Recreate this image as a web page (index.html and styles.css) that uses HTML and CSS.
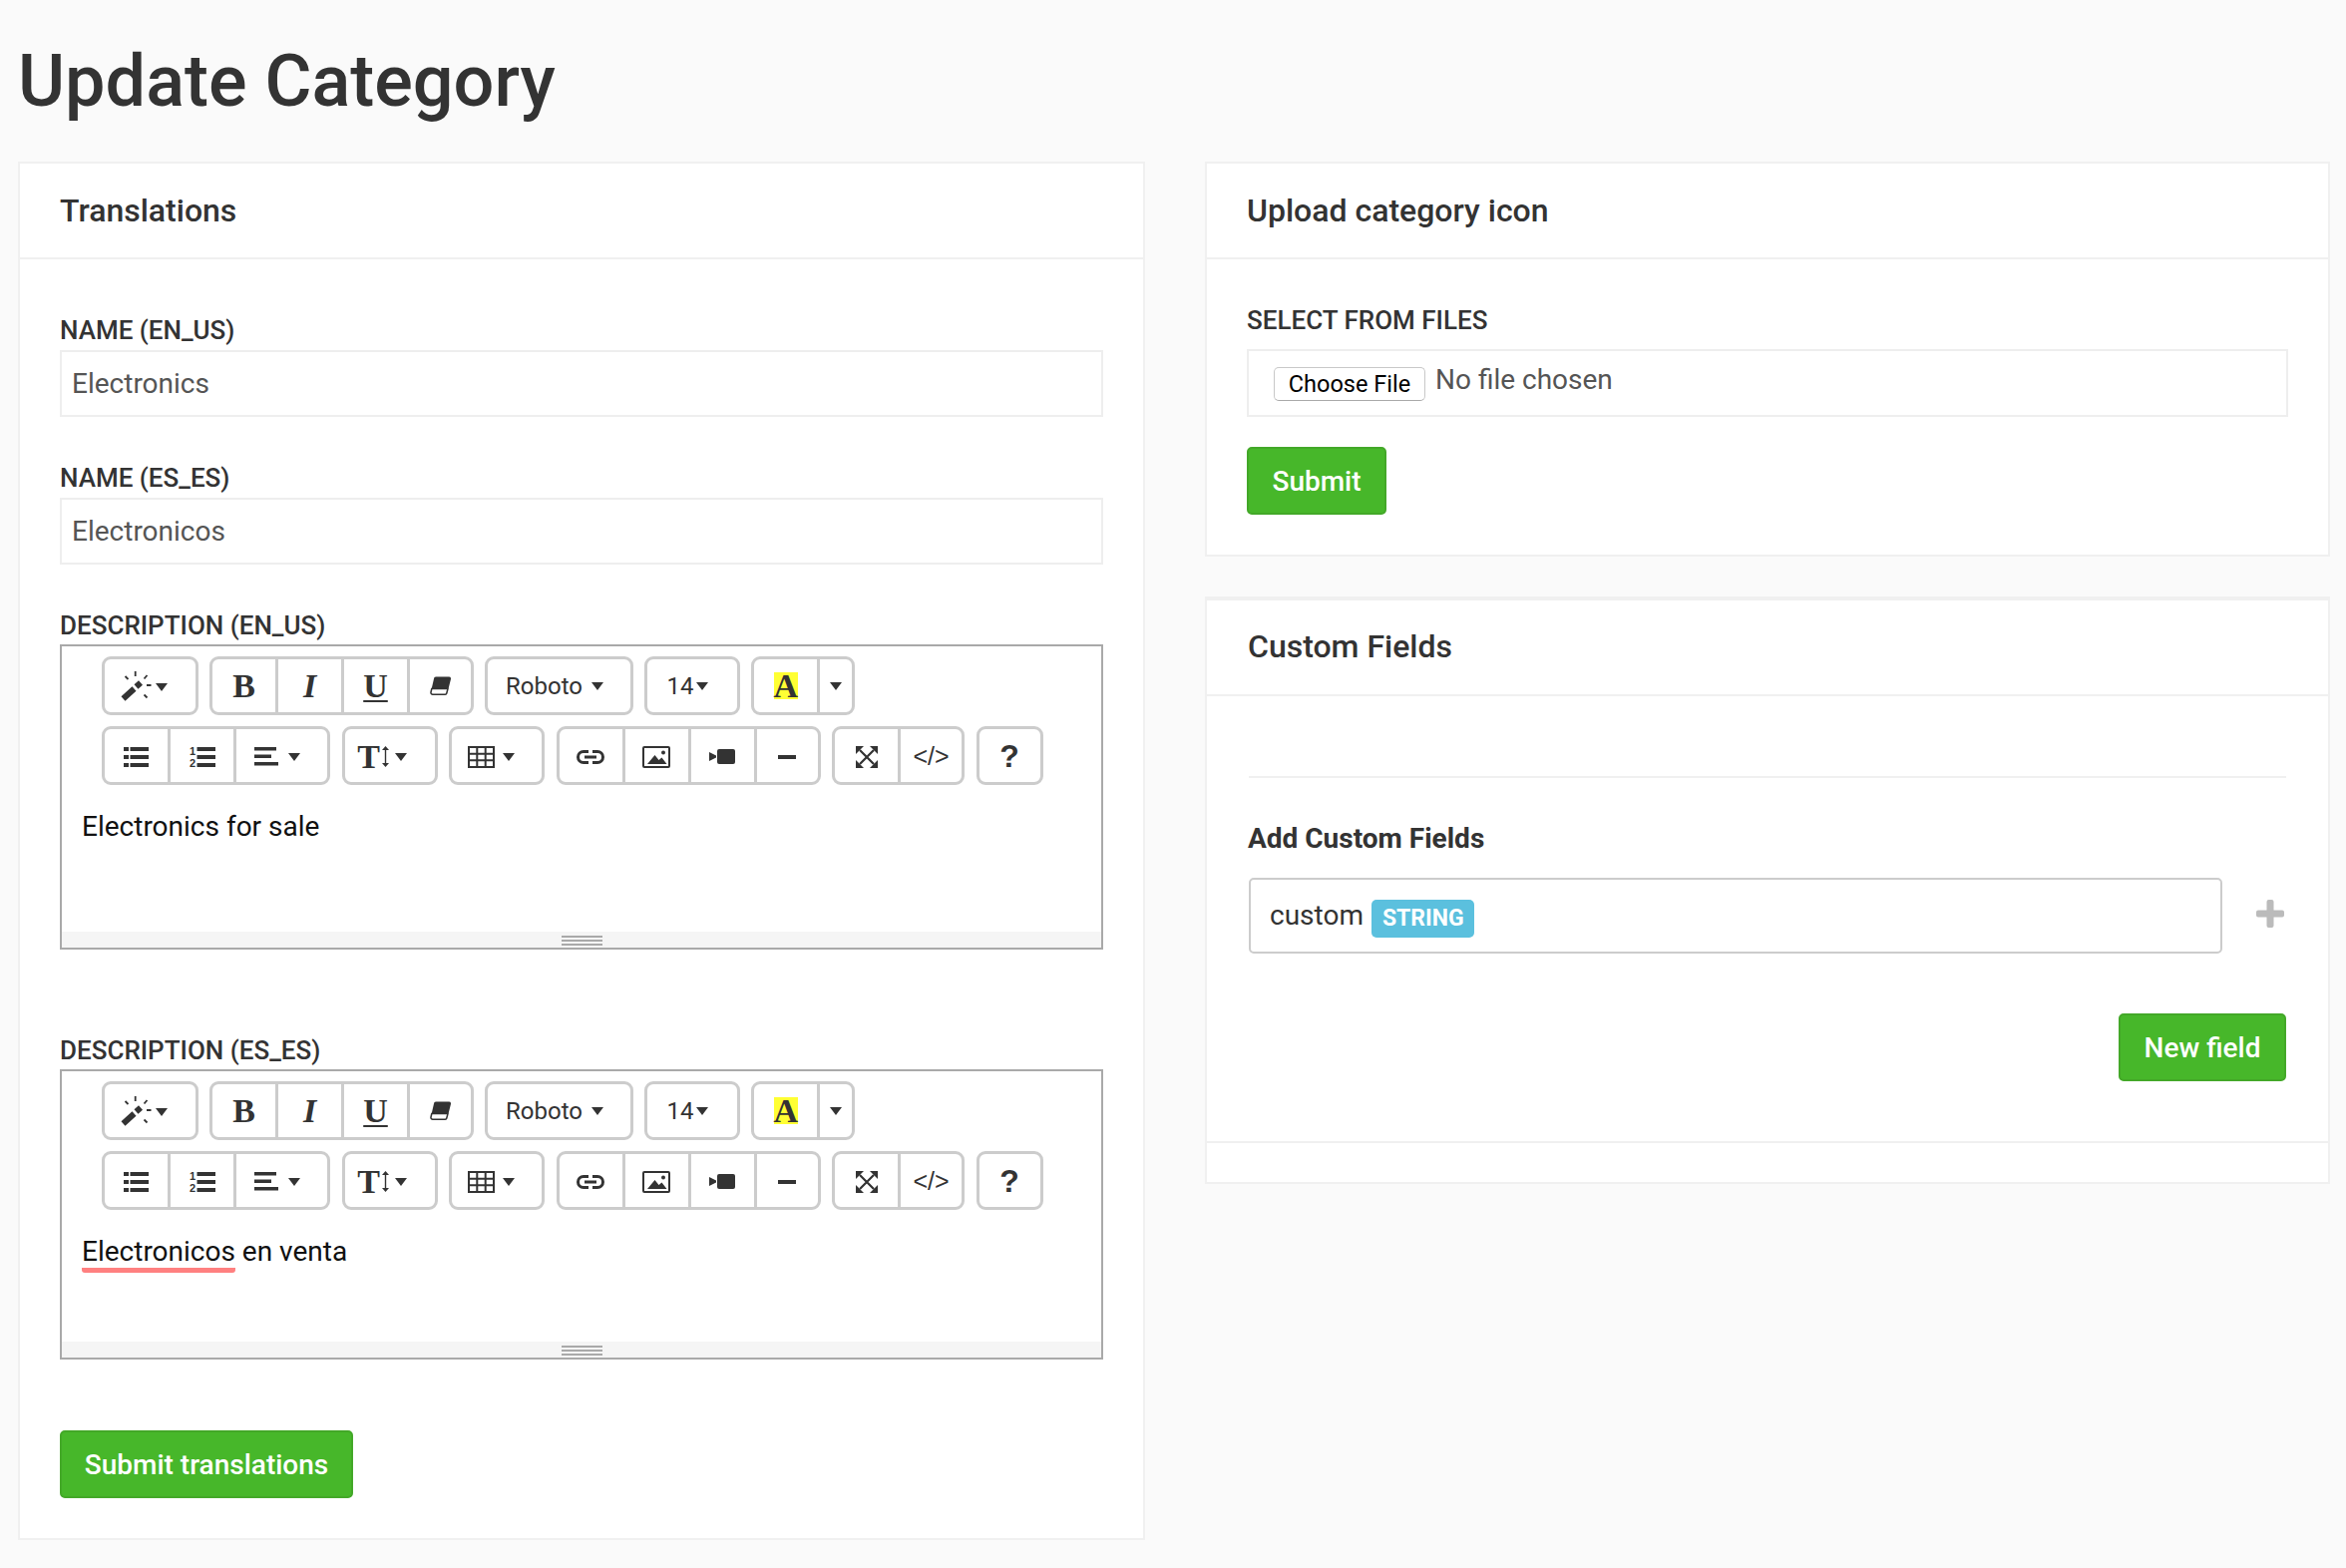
FILE: index.html
```html
<!DOCTYPE html>
<html>

<head>
    <meta charset="utf-8">
    <title>Update Category</title>
    <link rel="stylesheet" href="styles.css">
</head>

<body>
    <svg class="sprites" width="0" height="0">
        <symbol id="i-wand" viewBox="0 0 33 32">
            <path d="M3.500 28.500L14.500 18.500M16.500 16.500L21 12.500" stroke="currentColor" stroke-width="6" fill="none"/>
            <path d="M15.700 1v5M5.500 6l3 3M27.500 5l-3 3.500M27 15h4.500M24.500 24.500l3 3" stroke="currentColor" stroke-width="1.800" fill="none"/>
        </symbol>
        <symbol id="i-eraser" viewBox="0 0 21 19">
            <path d="M6 0.500h13a2 2 0 0 1 2 2.200L18.700 12H1.800L4 2.500a2 2 0 0 1 2-2z" fill="currentColor"/>
            <path d="M1.800 12.500H18L16.800 17a1.500 1.500 0 0 1-1.500 1.200H2.800A1.800 1.800 0 0 1 1 16z" fill="none" stroke="currentColor" stroke-width="1.500"/>
        </symbol>
        <symbol id="i-ul" viewBox="0 0 25 20">
            <path d="M0 0h5v4H0zM0 8h5v4H0zM0 16h5v4H0zM6.500 0H25v4H6.500zM6.500 8H25v4H6.500zM6.500 16H25v4H6.500z" fill="currentColor"/>
        </symbol>
        <symbol id="i-align" viewBox="0 0 24 19">
            <path d="M0 0h22v3.500H0zM0 7.500h17v3.500H0zM0 15h24v3.500H0z" fill="currentColor"/>
        </symbol>
        <symbol id="i-updown" viewBox="0 0 7 21">
            <path d="M3.500 2v17" stroke="currentColor" stroke-width="1.400"/>
            <path d="M3.500 0L7 4H0zM3.500 21L7 17H0z" fill="currentColor"/>
        </symbol>
        <symbol id="i-table" viewBox="0 0 27 22">
            <path d="M1 1h25v20H1zM1 7.700h25M1 14.300h25M9.300 1v20M17.700 1v20" fill="none" stroke="currentColor" stroke-width="2"/>
        </symbol>
        <symbol id="i-link" viewBox="0 0 28 14">
            <path d="M12 1.500H7a5.500 5.500 0 0 0 0 11h5M16 1.500h5a5.500 5.500 0 0 1 0 11h-5M8 7h12" fill="none" stroke="currentColor" stroke-width="3"/>
        </symbol>
        <symbol id="i-picture" viewBox="0 0 28 22">
            <rect x="1" y="1" width="26" height="20" rx="1" fill="none" stroke="currentColor" stroke-width="2"/>
            <path d="M5 18l7.500-9 4 5 3-2.500 5 6.500z" fill="currentColor"/>
            <circle cx="21" cy="6.500" r="2" fill="currentColor"/>
        </symbol>
        <symbol id="i-video" viewBox="0 0 26 15">
            <path d="M0 3l7 3.500v2L0 12z" fill="currentColor"/>
            <rect x="8" y="0" width="18" height="15" rx="2" fill="currentColor"/>
        </symbol>
        <symbol id="i-expand" viewBox="0 0 22 22">
            <path d="M4 4l14 14M18 4L4 18" stroke="currentColor" stroke-width="2.200"/>
            <path d="M0 0h8L0 8zM22 0v8L14 0zM0 22v-8l8 8zM22 22h-8l8-8z" fill="currentColor"/>
        </symbol>
        <symbol id="i-plus" viewBox="0 0 28 28">
            <path d="M10.500 2a2 2 0 0 1 2-2h3a2 2 0 0 1 2 2v8.500H26a2 2 0 0 1 2 2v3a2 2 0 0 1-2 2h-8.500V26a2 2 0 0 1-2 2h-3a2 2 0 0 1-2-2v-8.500H2a2 2 0 0 1-2-2v-3a2 2 0 0 1 2-2h8.500z" fill="currentColor"/>
        </symbol>
    </svg>

    <h1 class="page-title">Update Category</h1>

    <div class="columns">
        <section class="panel panel-main">
            <h2 class="panel-title">Translations</h2>
            <form class="panel-body translations">
                <label class="field-label">NAME (EN_US)</label>
                <div class="text-input">Electronics</div>

                <label class="field-label next-name">NAME (ES_ES)</label>
                <div class="text-input">Electronicos</div>

                <label class="field-label next-editor">DESCRIPTION (EN_US)</label>
                <div class="editor">
                    <div class="toolbar">
                        <div class="tool-row">
                            <div class="btn-group"><span class="tool w96 c-wand"><svg class="wand"><use href="#i-wand"/></svg><i class="caret"></i></span></div>
                            <div class="btn-group">
                                <span class="tool w66 serif-b">B</span>
                                <span class="tool w66 serif-i">I</span>
                                <span class="tool w66 serif-u">U</span>
                                <span class="tool w66"><svg class="eraser"><use href="#i-eraser"/></svg></span>
                            </div>
                            <div class="btn-group"><span class="tool w149 tool-text">Roboto<i class="caret small gap9 push9"></i></span></div>
                            <div class="btn-group"><span class="tool w96 tool-text">14<i class="caret small gap3 push9"></i></span></div>
                            <div class="btn-group">
                                <span class="tool w66"><span class="hilite">A</span></span>
                                <span class="tool w38"><i class="caret small"></i></span>
                            </div>
                        </div>
                        <div class="tool-row">
                            <div class="btn-group">
                                <span class="tool w66"><svg class="ul"><use href="#i-ul"/></svg></span>
                                <span class="tool w66"><svg class="ol" viewBox="0 0 26 22"><text x="0" y="9" class="ol-num">1</text><text x="0" y="21" class="ol-num">2</text><path d="M7.500 1H26v4H7.500zM7.500 9H26v4H7.500zM7.500 17H26v4H7.500z" fill="currentColor"/></svg></span>
                                <span class="tool w95"><svg class="align"><use href="#i-align"/></svg><i class="caret small gap10 push9"></i></span>
                            </div>
                            <div class="btn-group"><span class="tool w96"><span class="serif-t">T</span><svg class="updown"><use href="#i-updown"/></svg><i class="caret small gap6 push15"></i></span></div>
                            <div class="btn-group"><span class="tool w96"><svg class="table"><use href="#i-table"/></svg><i class="caret small gap8 push11"></i></span></div>
                            <div class="btn-group">
                                <span class="tool w66"><svg class="link"><use href="#i-link"/></svg></span>
                                <span class="tool w66"><svg class="picture"><use href="#i-picture"/></svg></span>
                                <span class="tool w66"><svg class="video"><use href="#i-video"/></svg></span>
                                <span class="tool w66"><i class="minus"></i></span>
                            </div>
                            <div class="btn-group">
                                <span class="tool w66"><svg class="expand"><use href="#i-expand"/></svg></span>
                                <span class="tool w66 code">&lt;/&gt;</span>
                            </div>
                            <div class="btn-group"><span class="tool w66 help">?</span></div>
                        </div>
                    </div>
                    <div class="editable tall"><p>Electronics for sale</p></div>
                    <div class="statusbar"><i class="grip"></i></div>
                </div>

                <label class="field-label next-desc">DESCRIPTION (ES_ES)</label>
                <div class="editor">
                    <div class="toolbar">
                        <div class="tool-row">
                            <div class="btn-group"><span class="tool w96 c-wand"><svg class="wand"><use href="#i-wand"/></svg><i class="caret"></i></span></div>
                            <div class="btn-group">
                                <span class="tool w66 serif-b">B</span>
                                <span class="tool w66 serif-i">I</span>
                                <span class="tool w66 serif-u">U</span>
                                <span class="tool w66"><svg class="eraser"><use href="#i-eraser"/></svg></span>
                            </div>
                            <div class="btn-group"><span class="tool w149 tool-text">Roboto<i class="caret small gap9 push9"></i></span></div>
                            <div class="btn-group"><span class="tool w96 tool-text">14<i class="caret small gap3 push9"></i></span></div>
                            <div class="btn-group">
                                <span class="tool w66"><span class="hilite">A</span></span>
                                <span class="tool w38"><i class="caret small"></i></span>
                            </div>
                        </div>
                        <div class="tool-row">
                            <div class="btn-group">
                                <span class="tool w66"><svg class="ul"><use href="#i-ul"/></svg></span>
                                <span class="tool w66"><svg class="ol" viewBox="0 0 26 22"><text x="0" y="9" class="ol-num">1</text><text x="0" y="21" class="ol-num">2</text><path d="M7.500 1H26v4H7.500zM7.500 9H26v4H7.500zM7.500 17H26v4H7.500z" fill="currentColor"/></svg></span>
                                <span class="tool w95"><svg class="align"><use href="#i-align"/></svg><i class="caret small gap10 push9"></i></span>
                            </div>
                            <div class="btn-group"><span class="tool w96"><span class="serif-t">T</span><svg class="updown"><use href="#i-updown"/></svg><i class="caret small gap6 push15"></i></span></div>
                            <div class="btn-group"><span class="tool w96"><svg class="table"><use href="#i-table"/></svg><i class="caret small gap8 push11"></i></span></div>
                            <div class="btn-group">
                                <span class="tool w66"><svg class="link"><use href="#i-link"/></svg></span>
                                <span class="tool w66"><svg class="picture"><use href="#i-picture"/></svg></span>
                                <span class="tool w66"><svg class="video"><use href="#i-video"/></svg></span>
                                <span class="tool w66"><i class="minus"></i></span>
                            </div>
                            <div class="btn-group">
                                <span class="tool w66"><svg class="expand"><use href="#i-expand"/></svg></span>
                                <span class="tool w66 code">&lt;/&gt;</span>
                            </div>
                            <div class="btn-group"><span class="tool w66 help">?</span></div>
                        </div>
                    </div>
                    <div class="editable short"><p><span class="misspelled">Electronicos</span> en venta</p></div>
                    <div class="statusbar"><i class="grip"></i></div>
                </div>

                <button type="button" class="btn-green submit-translations">Submit translations</button>
            </form>
        </section>

        <div class="side">
            <section class="panel">
                <h2 class="panel-title">Upload category icon</h2>
                <form class="panel-body upload">
                    <label class="field-label upload-label">SELECT FROM FILES</label>
                    <div class="text-input file-input">
                        <button type="button" class="choose-file">Choose File</button>
                        <span class="no-file">No file chosen</span>
                    </div>
                    <button type="button" class="btn-green submit-icon">Submit</button>
                </form>
            </section>

            <section class="panel panel-fields">
                <h2 class="panel-title">Custom Fields</h2>
                <div class="panel-body fields">
                    <hr class="rule">
                    <h3 class="fields-title">Add Custom Fields</h3>
                    <div class="field-row">
                        <div class="field-box">custom <span class="badge">STRING</span></div>
                        <svg class="plus"><use href="#i-plus"/></svg>
                    </div>
                    <div class="fields-actions">
                        <button type="button" class="btn-green new-field">New field</button>
                    </div>
                </div>
                <div class="panel-footer"></div>
            </section>
        </div>
    </div>
</body>

</html>
```

FILE: styles.css
```css
* {
    box-sizing: border-box;
}

body {
    margin: 0;
    padding: 0 16px 28px 18px;
    background-color: #fafafa;
    font-family: Roboto, "Liberation Sans", sans-serif;
    color: #333;
}

.sprites {
    position: absolute;
}

.page-title {
    margin: 0;
    height: 162px;
    padding-top: 40px;
    font-size: 72px;
    line-height: 84px;
    font-weight: 500;
}

.columns {
    display: flex;
    gap: 60px;
    align-items: flex-start;
}

.panel {
    background-color: #fff;
    border: 2px solid #f0f0f0;
}

.panel-main {
    width: 1130px;
}

.side {
    width: 1128px;
    display: flex;
    flex-direction: column;
    gap: 40px;
}

.panel-title {
    margin: 0;
    height: 96px;
    padding: 0 40px;
    border-bottom: 2px solid #f0f0f0;
    font-size: 32px;
    line-height: 94px;
    font-weight: 500;
}

.field-label {
    display: block;
    height: 30px;
    margin-bottom: 5px;
    font-size: 26px;
    line-height: 30px;
    font-weight: 500;
}

.next-name {
    margin-top: 46px;
}

.next-editor {
    margin-top: 46px;
    margin-bottom: 4px;
}

.next-desc {
    margin-top: 86px;
    margin-bottom: 4px;
}

.text-input {
    height: 67px;
    padding-left: 10px;
    border: 2px solid #eee;
    font-size: 28px;
    line-height: 63px;
    color: #555;
}

/* left panel */
.translations {
    padding: 56px 40px 40px;
}

.editor {
    border: 2px solid #a9a9a9;
}

.toolbar {
    padding: 10px 0 0 40px;
    display: flex;
    flex-direction: column;
    gap: 11px;
}

.tool-row {
    display: flex;
    gap: 11.5px;
}

.tool-row:first-child {
    gap: 11px;
}

.tool-row:last-child .tool {
    padding-top: 2px;
}

.btn-group {
    display: flex;
    height: 59px;
    border: 3px solid #ccc;
    border-radius: 9px;
}

.tool {
    display: flex;
    align-items: center;
    justify-content: center;
    height: 100%;
    border-left: 3px solid #ccc;
    color: #333;
}

.tool:first-child {
    border-left: 0;
}

.w38 { width: 35px; }
.w66 { width: 66px; }
.w66:first-child { width: 63px; }
.w66:last-child { width: 64px; }
.w66:only-child { width: 61px; }
.w95 { width: 94px; }
.w96 { width: 90px; }
.w96.c-wand { width: 91px; }
.w149 { width: 143px; }

.tool-text {
    font-size: 24px;
}

.serif-b, .serif-i, .serif-u, .serif-t, .hilite {
    font-family: "Liberation Serif", serif;
    font-size: 34px;
    font-weight: bold;
}

.serif-i {
    font-style: italic;
}

.serif-u {
    text-decoration: underline;
    text-decoration-thickness: 2px;
    text-underline-offset: 3px;
}

.hilite {
    width: 24px;
    height: 27px;
    line-height: 27px;
    text-align: center;
    background-color: #ffff33;
}

.code {
    font-family: "Liberation Sans", sans-serif;
    font-size: 25px;
}

.help {
    font-family: "Liberation Sans", sans-serif;
    font-size: 32px;
    font-weight: bold;
}

.caret {
    display: block;
    width: 0;
    height: 0;
    margin-top: 3px;
    border-top: 8px solid #333;
    border-left: 6px solid transparent;
    border-right: 6px solid transparent;
}

.caret.small {
    margin-top: 1px;
}

.c-wand .caret {
    margin-right: 14px;
}

.gap3 { margin-left: 3px; }
.gap6 { margin-left: 6px; }
.gap8 { margin-left: 8px; }
.gap9 { margin-left: 9px; }
.gap10 { margin-left: 10px; }

.push9 { margin-right: 9px; }
.push11 { margin-right: 11px; }
.push15 { margin-right: 15px; }

.wand { width: 33px; height: 32px; margin-right: 3px; }
.eraser { width: 21px; height: 19px; }
.ul { width: 25px; height: 20px; }
.ol { width: 26px; height: 22px; }
.align { width: 24px; height: 19px; }
.updown { width: 7px; height: 21px; margin-left: 2px; }
.table { width: 27px; height: 22px; }
.link { width: 28px; height: 14px; }
.picture { width: 28px; height: 22px; }
.video { width: 26px; height: 15px; }
.expand { width: 22px; height: 22px; }

.ol-num {
    font-family: "Liberation Sans", sans-serif;
    font-size: 11px;
    font-weight: bold;
    fill: #333;
}

.minus {
    display: block;
    width: 18px;
    height: 4px;
    background-color: #333;
}

.editable {
    padding: 22px 20px 0 20px;
    font-size: 28px;
    line-height: 40px;
    color: #111;
}

.editable p {
    margin: 0;
}

.tall {
    height: 147px;
}

.short {
    height: 132px;
}

.misspelled {
    display: inline-block;
    height: 41px;
    border-bottom: 5px solid #ff8080;
    border-radius: 0 0 3px 3px;
}

.statusbar {
    display: flex;
    justify-content: center;
    height: 16px;
    padding-top: 4px;
    background-color: #f5f5f5;
}

.grip {
    display: block;
    width: 41px;
    height: 10px;
    border-top: 2px solid #a9a9a9;
    border-bottom: 2px solid #a9a9a9;
    background: linear-gradient(#a9a9a9, #a9a9a9) center / 100% 2px no-repeat;
}

.btn-green {
    display: block;
    height: 68px;
    padding: 0;
    border: 2px solid #43a828;
    border-radius: 5px;
    background-color: #47b72a;
    color: #fff;
    font-family: Roboto, "Liberation Sans", sans-serif;
    font-size: 28px;
    font-weight: 500;
}

.submit-translations {
    width: 294px;
    margin-top: 71px;
}

/* right column */
.upload {
    padding: 46px 40px 40px;
}

.upload-label {
    margin-bottom: 14px;
}

.file-input {
    display: flex;
    height: 68px;
    padding-left: 25px;
    line-height: 1;
}

.choose-file {
    width: 152px;
    height: 34px;
    margin-top: 16px;
    padding: 0;
    background-color: #fff;
    border: 1px solid #c8c8c8;
    border-bottom-color: #aaa;
    border-radius: 5px;
    font-family: Roboto, "Liberation Sans", sans-serif;
    font-size: 23.5px;
    color: #000;
}

.no-file {
    margin-left: 10px;
    margin-top: 14px;
    height: 32px;
    line-height: 30px;
}

.submit-icon {
    width: 140px;
    margin-top: 30px;
}

.panel-fields {
    border-width: 4px 2px 2px 2px;
}

.panel-fields .panel-title {
    padding-left: 41px;
    line-height: 92px;
}

.fields {
    height: 446px;
    padding: 80px 42px 0;
}

.rule {
    margin: 0;
    border: 0;
    height: 2px;
    background-color: #f0f0f0;
}

.fields-title {
    margin: 44px 0 0 -1px;
    font-size: 28px;
    line-height: 34px;
    font-weight: 700;
}

.field-row {
    display: flex;
    align-items: flex-start;
    margin-top: 22px;
}

.field-box {
    width: 976px;
    height: 76px;
    padding-left: 19px;
    border: 2px solid #ccc;
    border-radius: 5px;
    font-size: 28px;
    line-height: 72px;
}

.badge {
    display: inline-block;
    height: 38px;
    padding: 0 10px 0 11px;
    margin-left: 1px;
    border-radius: 5px;
    background-color: #5bc0de;
    color: #fff;
    font-size: 23px;
    font-weight: 700;
    line-height: 38px;
    vertical-align: -1px;
}

.plus {
    width: 28px;
    height: 28px;
    margin: 22px 0 0 34px;
    color: #bbb;
}

.fields-actions {
    display: flex;
    justify-content: flex-end;
    margin-top: 60px;
}

.new-field {
    width: 168px;
}

.panel-footer {
    height: 41px;
    border-top: 2px solid #f0f0f0;
}
```
